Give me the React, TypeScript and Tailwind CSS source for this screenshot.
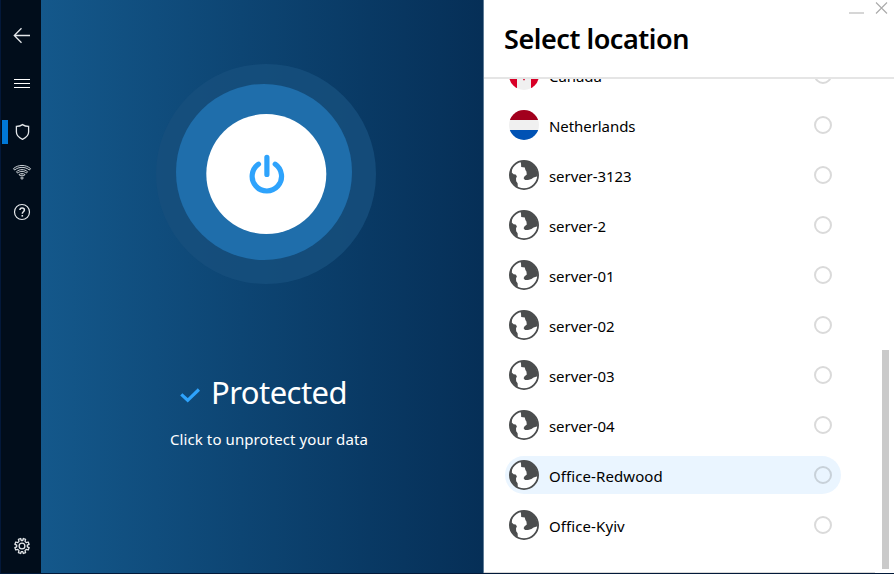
import React from "react";

const locations = [
  { name: "Canada", icon: "ca" },
  { name: "Netherlands", icon: "nl" },
  { name: "server-3123" },
  { name: "server-2" },
  { name: "server-01" },
  { name: "server-02" },
  { name: "server-03" },
  { name: "server-04" },
  { name: "Office-Redwood", active: true },
  { name: "Office-Kyiv" },
];

function Globe() {
  return (
    <svg className="size-[30px] shrink-0" viewBox="0 0 30 30" fill="#4b4d4e">
      <circle cx="15" cy="15" r="14.1" fill="white" stroke="#4b4d4e" strokeWidth="1.8" />
      <path d="M11.3 1.2 12 3.5 12.2 7 15.8 7.4 16.4 10 17.4 11.5 17.8 14.5 15.4 16.6 14.6 18.2 16 19.9 19 20 22.4 19 24.6 17.4 28.6 16.2A14.2 14.2 0 0 0 11.3 1.2Z" />
      <path d="M3.6 7.5 3 10.2 2.8 12.6 4.6 14.3 6.6 14.6 7.9 16.2 7 18.6 7.2 21.2 8.6 23.2 8.8 27A14 14 0 0 1 2 9Z" />
    </svg>
  );
}

function Flag({ country }: { country: string }) {
  return (
    <span className="flex size-[30px] shrink-0 overflow-hidden rounded-full bg-[#f0f0f0]">
      {country === "nl" ? (
        <span className="flex w-full flex-col justify-between">
          <span className="h-[10px] bg-[#a2001d]" />
          <span className="h-[10px] bg-[#0052b4]" />
        </span>
      ) : (
        <svg viewBox="0 0 30 30">
          <path d="M0 0h8v30H0zM22 0h8v30h-8z" fill="#d80027" />
          <path d="m15 6 1.7 3.5 2-1-.8 4 3.3-.8-.8 2.6-4.6 3.5v2.4h-1.6v-2.4l-4.6-3.5-.8-2.6 3.3.8-.8-4 2 1z" fill="#d80027" />
        </svg>
      )}
    </span>
  );
}

function Sidebar() {
  return (
    <nav className="flex w-[41px] shrink-0 flex-col border-l border-[#03183a] bg-[#010d1b] pt-[25px] pb-[17px]">
      <svg className="ml-[11px] size-5" viewBox="0 0 20 20" fill="none" stroke="#e4e7ea" strokeWidth="1.3">
        <path d="M18 10.5H2.5M9.5 3.3 2.3 10.5l7.2 7.2" />
      </svg>
      <svg className="mt-[28px] ml-[11px] size-5" viewBox="0 0 20 20" fill="none" stroke="white" strokeWidth="1">
        <path d="M2 6.5h16M2 10.5h16M2 14.5h16" />
      </svg>
      <div className="mt-[27px] flex h-6 items-center border-l border-[#010d1b]">
        <span className="h-6 w-1.5 bg-[#0078d7]" />
        <svg className="ml-[4px] size-5" viewBox="0 0 20 20" fill="none" stroke="#e4e7ea" strokeWidth="1.3">
          <path d="M10.5 2.6C8.5 4 6.5 4.4 4.4 4.4V10c0 3.6 2.5 5.7 6.1 7.3 3.6-1.6 6.1-3.7 6.1-7.3V4.4c-2.1 0-4.1-.4-6.1-1.8Z" />
        </svg>
      </div>
      <svg className="mt-[18px] ml-[11px] size-5" viewBox="0 0 20 20" fill="none" stroke="#d5dade" strokeWidth="0.95" strokeLinejoin="round">
        <path d="M1.5 6.6C6.2 2.4 13.8 2.4 18.5 6.6L17.4 8C13.2 4.5 6.8 4.5 2.6 8Z" />
        <path d="M4.5 9.7c3.1-2.8 7.9-2.8 11 0l-1.1 1.4c-2.5-2.3-6.3-2.3-8.8 0Z" />
        <path d="M7 12.6c1.8-1.4 4.2-1.4 6 0l-1.1 1.2c-1.1-.8-2.7-.8-3.8 0Z" />
        <circle cx="10" cy="16" r="1.1" />
      </svg>
      <svg className="mt-[20px] ml-[11px] size-5" viewBox="0 0 20 20" fill="none" stroke="#e4e7ea" strokeWidth="1.2">
        <circle cx="10" cy="10" r="7.5" />
        <path d="M7.9 8.1c0-3 4.5-2.8 4.5-.2 0 1.9-2.1 1.8-2.1 3.8" strokeWidth="1.5" />
        <path d="M10.3 13v1.6" strokeWidth="1.6" />
      </svg>
      <svg className="mt-auto ml-[11px] size-5" viewBox="0 0 20 20" fill="none" stroke="#e4e7ea" strokeWidth="1.3" strokeLinejoin="round">
        <path d="m8.7 2.5.5 2 1.6 0 .5-2 2.3.9-.6 2 1.2 1.2 2-.6.9 2.3-1.8.9v1.6l1.8.9-.9 2.3-2-.6-1.2 1.2.6 2-2.3.9-.5-1.9H9.2l-.5 1.9-2.3-.9.6-2-1.2-1.2-2 .6-.9-2.3 1.8-.9V9.2l-1.8-.9.9-2.3 2 .6L7 5.4l-.6-2Z" />
        <circle cx="10" cy="10" r="2.9" />
      </svg>
    </nav>
  );
}

function StatusPanel() {
  return (
    <section className="flex w-[443px] shrink-0 flex-col border-r border-[#5f7c96] bg-linear-to-r from-[#14588b] to-[#062f57] pt-[64px] text-white">
      <svg className="ml-[115px] h-[220px] w-[220px]" viewBox="0 0 220 220">
        <circle cx="110" cy="110" r="110" fill="#164f7c" fillOpacity="0.85" />
        <circle cx="108" cy="108" r="88" fill="#1f6eab" />
        <circle cx="110.3" cy="110" r="60" fill="white" />
        <g fill="none" stroke="#2ea3fc" strokeWidth="5.2" strokeLinecap="round">
          <path d="M102.5 100.2A14.7 14.7 0 1 0 119.2 100.2M110.9 93.4v17" />
        </g>
      </svg>
      <div className="mt-[84px] ml-[139px] flex h-[48px] items-center">
        <svg className="mt-[5px] h-4 w-5" viewBox="0 0 20 16" fill="none" stroke="#2ea3fc" strokeWidth="3.2">
          <path d="m1.3 7.4 6.4 5.9L18.9 2.5" />
        </svg>
        <span className="ml-[11px] text-[31px] leading-[48px] tracking-[-0.55px]">Protected</span>
      </div>
      <p className="mt-[11px] ml-[129px] text-[15px] leading-[24px] tracking-[0.09px] whitespace-nowrap">
        Click to unprotect your data
      </p>
    </section>
  );
}

function LocationPanel() {
  return (
    <section className="flex min-w-0 grow flex-col bg-white">
      <header className="flex h-[79px] shrink-0 justify-between border-b-2 border-[#e5e5e5] pt-[19px] pl-[20px]">
        <h1 className="text-[27px] leading-[40px] font-semibold tracking-[-0.45px]">Select location</h1>
        <svg className="-mt-[19px] h-5 w-[50px]" viewBox="0 0 50 20" fill="none">
          <path d="M5 13h15" stroke="#c8c8c8" strokeWidth="1.5" />
          <path d="m32 2.5 11 11m0-11-11 11" stroke="#aaa" strokeWidth="1.1" />
        </svg>
      </header>
      <div className="flex min-h-0 grow">
        <div className="min-h-0 w-[391px] shrink-0 overflow-hidden border-b border-[#d8d8d8]">
          <ul className="-mt-[23px] ml-[21px] w-[336px]">
            {locations.map((item) => (
              <li
                key={item.name}
                className={
                  "mb-3 flex h-[38px] items-center rounded-full pr-[9px] pb-px pl-1 " + (item.active ? "bg-[#eaf5ff]" : "")
                }
              >
                {item.icon ? <Flag country={item.icon} /> : <Globe />}
                <span
                  className={
                    "mt-[3px] ml-[10px] text-[15px] whitespace-nowrap " +
                    (item.name.startsWith("Office") ? "tracking-[0.09px]" : "tracking-[-0.07px]")
                  }
                >
                  {item.name}
                </span>
                <span
                  className={
                    "ml-auto size-[18px] rounded-full border-2 " + (item.active ? "border-[#c8d1d9]" : "border-[#dadada]")
                  }
                />
              </li>
            ))}
          </ul>
        </div>
        <div className="mt-[271px] mb-1 ml-[7px] w-[7px] bg-[#cacaca]" />
      </div>
    </section>
  );
}

export default function App() {
  return (
    <main className="flex h-[574px] w-[894px] overflow-hidden border-b border-[#021a3a] font-['Noto_Sans','Open_Sans',sans-serif] text-black">
      <Sidebar />
      <StatusPanel />
      <LocationPanel />
    </main>
  );
}
